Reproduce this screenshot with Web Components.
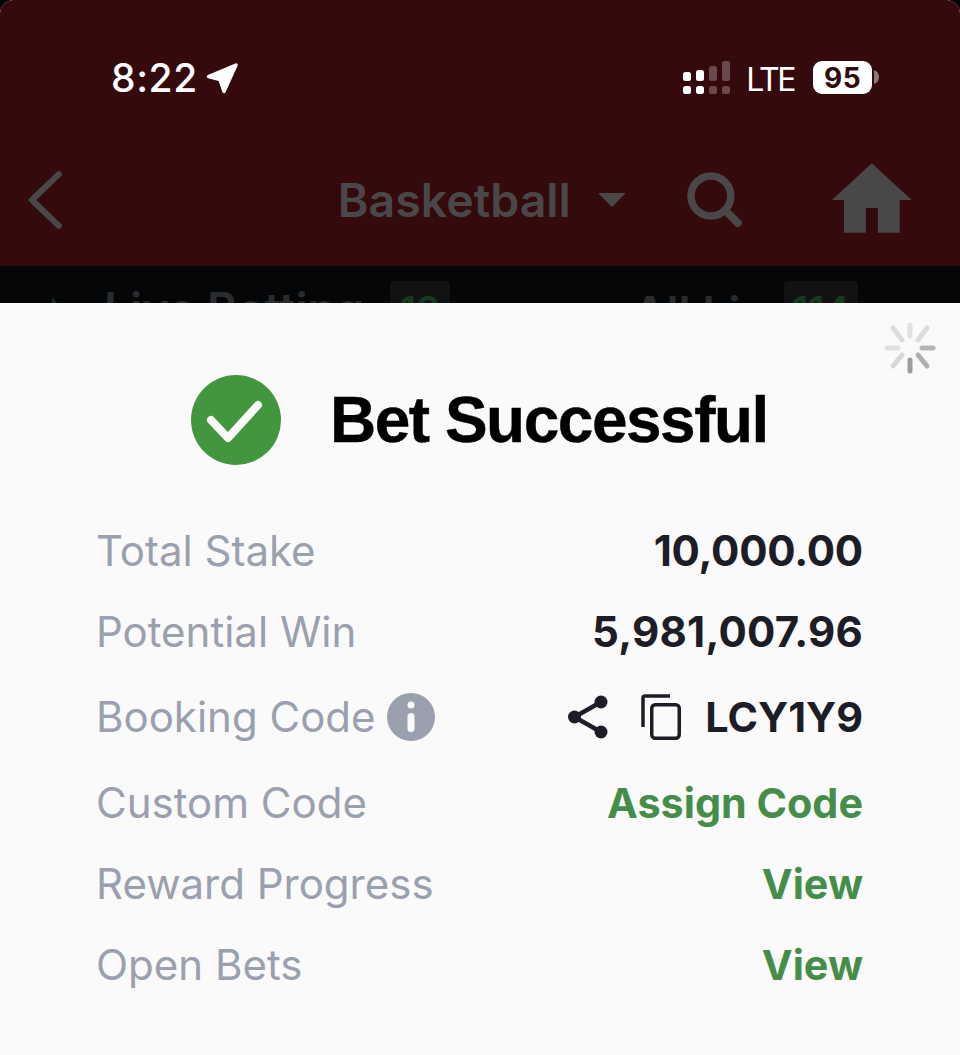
<!DOCTYPE html>
<html><head><meta charset="utf-8"><style>
html,body{margin:0;padding:0;background:#000}
body{width:960px;height:1055px;overflow:hidden}
</style></head><body>
<bet-screen>
  <status-bar slot="top"></status-bar>
  <nav-bar slot="top"></nav-bar>
  <tab-strip slot="top"></tab-strip>
  <success-sheet>
    <sheet-heading>Bet Successful</sheet-heading>
    <info-row label="Total Stake" value="10,000.00" num="-.2"></info-row>
    <info-row label="Potential Win" value="5,981,007.96" num=".25"></info-row>
    <info-row label="Booking Code" value="LCY1Y9" info tools h="90"></info-row>
    <info-row label="Custom Code" value="Assign Code" link></info-row>
    <info-row label="Reward Progress" value="View" link></info-row>
    <info-row label="Open Bets" value="View" link></info-row>
  </success-sheet>
</bet-screen>
<script>
function def(name, html, init){
  customElements.define(name, class extends HTMLElement{
    constructor(){super();this.attachShadow({mode:'open'}).innerHTML=html;}
    connectedCallback(){ if(init) init.call(this,this.shadowRoot); }
  });
}
def('bet-screen',`<style>
:host{display:flex;flex-direction:column;width:960px;height:1055px;background:#fafafa;border-radius:14px 14px 0 0;overflow:hidden}
</style><slot name="top"></slot><slot></slot>`);

def('status-bar',`<style>
:host{display:flex;box-sizing:border-box;height:136px;background:#350a0c;color:#fff;justify-content:space-between;padding:56px 80px 0 111px;font-family:Inter,sans-serif}
.l,.r{display:flex;align-items:flex-start}
.t{font-size:39px;line-height:44px;font-weight:500;letter-spacing:.6px}
.lte{font-size:32px;line-height:48px;font-weight:400;margin:0 19px 0 16px;letter-spacing:-2.4px}
.batt{width:59px;height:33px;margin-top:5px;border-radius:9px;background:#fff;color:#350a0c;font-size:28px;font-weight:700;line-height:34px;text-align:center;letter-spacing:.5px}
svg{display:block}
</style>
<div class="l"><span class="t">8:22</span>
<svg width="34" height="34" viewBox="0 0 34 34" style="margin:6px 0 0 8px"><path d="M2.500 14.500 30 3 18 29.500 14 17.500z" fill="#fff" stroke="#fff" stroke-width="3.500" stroke-linejoin="round"/></svg></div>
<div class="r">
<svg width="47" height="34" viewBox="0 0 47 34" style="margin-top:5px">
<g fill="#fff"><rect x="0" y="11" width="8" height="9" rx="2.500"/><rect x="0" y="25" width="8" height="8" rx="2.500"/><rect x="13" y="9" width="8" height="11" rx="2.500"/><rect x="13" y="25" width="8" height="8" rx="2.500"/></g>
<g fill="#6a4a4c"><rect x="26" y="5" width="8" height="15" rx="2.500"/><rect x="26" y="25" width="8" height="8" rx="2.500"/><rect x="39" y="0" width="8" height="20" rx="2.500"/><rect x="39" y="25" width="8" height="8" rx="2.500"/></g></svg>
<span class="lte">LTE</span><span class="batt">95</span>
<svg width="6" height="14" viewBox="0 0 6 14" style="margin:14px 0 0 2px"><path d="M0 0c3 1 5 3.500 5 7s-2 6-5 7z" fill="#8c7a7b"/></svg>
</div>`);

def('nav-bar',`<style>
:host{display:block;position:relative;height:130px;background:#350a0c;font-family:Inter,sans-serif;color:#484848}
.row{display:flex;align-items:flex-start;height:130px;box-sizing:border-box;padding:28px 48px 0 26px}
.title{font-size:46.500px;line-height:56px;font-weight:600;margin-left:272px;margin-top:8px}
svg{display:block}
</style><div class="row">
<svg width="40" height="60" viewBox="0 0 40 60" style="margin-top:6px"><path d="M33 4 6 30 33 56" fill="none" stroke="#484848" stroke-width="6" stroke-linecap="round" stroke-linejoin="round"/></svg>
<span class="title">Basketball</span>
<svg width="30" height="16" viewBox="0 0 30 16" style="margin:28px 0 0 26px"><path d="M1 1h28L15 15z" fill="#484848"/></svg>
<svg width="56" height="56" viewBox="0 0 56 56" style="margin:8px 0 0 60px"><circle cx="24" cy="24" r="20" fill="none" stroke="#484848" stroke-width="7.500"/><path d="M38 38 51 51" stroke="#484848" stroke-width="8" stroke-linecap="round"/></svg>
<svg width="80" height="72" viewBox="0 0 80 72" style="margin:-1px 0 0 90px"><path d="M40 0 80 37H68V70H46V45H34V70H12V37H0z" fill="#484848"/></svg>
</div>`);

def('tab-strip',`<style>
:host{display:block;position:relative;height:37px;background:#050608;overflow:hidden;font-family:Inter,sans-serif}
.row{display:flex;align-items:flex-start;padding:15px 0 0 52px;color:#2a2b2d;font-size:46px;line-height:46px;font-weight:600;white-space:nowrap}
.tri{flex:none;width:0;height:0;border-left:12px solid #10301a;border-top:14px solid transparent;border-bottom:14px solid transparent;margin:16px 40px 0 0}
.b{flex:none;background:#101214;color:#173a1f;border-radius:4px;height:60px;text-align:center;font-size:38px;line-height:58px}
.n{display:block;flex:none;margin-top:5px}
</style><div class="row"><span class="tri"></span><span class="n" style="width:286px">Live Betting</span><span class="b" style="width:60px">13</span><span class="n" style="margin:9px 0 0 183px;width:151px">All Li</span><span class="b" style="width:74px">114</span></div>`);

def('success-sheet',`<style>
:host{display:block;position:relative;flex:1;background:#fafafa;padding:0 97px 0 96px;font-family:Inter,sans-serif}
.spin{position:absolute;right:24px;top:19px}
</style>
<svg class="spin" width="52" height="52" viewBox="0 0 52 52" stroke-width="5" stroke-linecap="round" fill="none">
<path d="M26 3v11" stroke="#e1e1e1"/><path d="M34 18 43 6" stroke="#dcdcdc"/><path d="M49 26H38" stroke="#b4b5b8"/><path d="M34 33 43 44" stroke="#aeb0b3"/><path d="M26 38v11" stroke="#9b9da1"/><path d="M18 33 9 44" stroke="#d8d8d8"/><path d="M14 26H3" stroke="#dfdfdf"/><path d="M18 18 9 6" stroke="#dcdcdc"/></svg>
<slot></slot>`);

def('sheet-heading',`<style>
:host{display:flex;align-items:flex-start;height:207px;padding:72px 0 0 95px;box-sizing:border-box}
.t{font:700 64px/90px "Liberation Sans",Arial,sans-serif;color:#000;margin-left:49px;letter-spacing:-1.5px;-webkit-text-stroke:.4px #000}
svg{display:block}
</style>
<svg width="90" height="90" viewBox="0 0 90 90"><circle cx="45" cy="45" r="45" fill="#41963e"/><path d="M20 45 37 63 67 30" fill="none" stroke="#fafafa" stroke-width="8" stroke-linecap="round" stroke-linejoin="round"/></svg>
<span class="t"><slot></slot></span>`);

def('info-row',`<style>
:host{display:flex;align-items:center;justify-content:space-between;height:81px;font-size:42px;line-height:48px;font-family:Inter,sans-serif}
.k{display:flex;align-items:center;color:#9aa0ae}
.v{display:flex;align-items:center;font-weight:700;font-size:41.300px;color:#1c1d26}
.v.num{font-size:42px}
.link{color:#448e49}
svg{display:block}
</style><span class="k" id="k"></span><span class="v" id="v"></span>`,function(s){
  const k=s.getElementById('k'),v=s.getElementById('v');
  if(this.hasAttribute('h'))this.style.height=this.getAttribute('h')+'px';
  if(this.hasAttribute('num')){v.classList.add('num');v.style.letterSpacing=this.getAttribute('num')+'px';}
  k.textContent=this.getAttribute('label');
  if(this.hasAttribute('info')){
    k.insertAdjacentHTML('beforeend',`<svg width="48" height="48" viewBox="0 0 48 48" style="margin-left:11px"><circle cx="24" cy="24" r="24" fill="#9aa0ae"/><circle cx="24" cy="12" r="3.500" fill="#fafafa"/><rect x="20.500" y="20" width="7" height="19" rx="3.500" fill="#fafafa"/></svg>`);
  }
  if(this.hasAttribute('tools')){
    v.insertAdjacentHTML('beforeend',`<svg width="40" height="48" viewBox="0 0 40 48"><path d="M33 9 6.500 24 33 39" fill="none" stroke="#1c1d26" stroke-width="4.500"/><g fill="#1c1d26"><circle cx="33" cy="9" r="6.500"/><circle cx="6.500" cy="24" r="6.500"/><circle cx="33" cy="39" r="6.500"/></g></svg>
    <svg width="40" height="46" viewBox="0 0 40 46" style="margin:0 24px 0 33px"><path d="M2 33V4Q2 2 4 2H29" fill="none" stroke="#1c1d26" stroke-width="3.500"/><rect x="10.750" y="10.750" width="27.500" height="33.500" rx="3.500" fill="none" stroke="#1c1d26" stroke-width="3.500"/></svg>`);
  }
  if(this.hasAttribute('link'))v.classList.add('link');
  v.appendChild(document.createTextNode(this.getAttribute('value')));
});
</script>
</body></html>
